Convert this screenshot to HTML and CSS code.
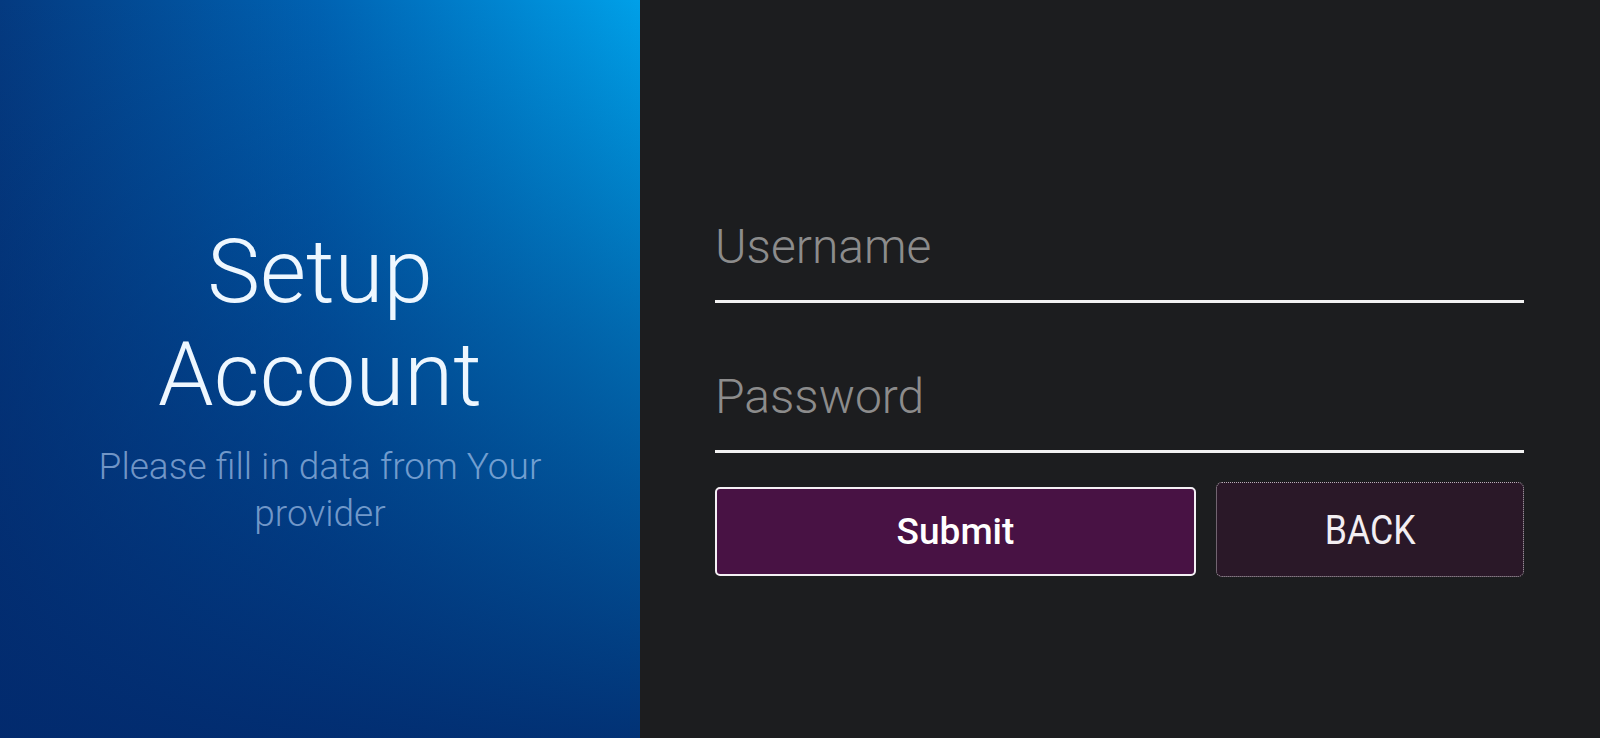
FILE: index.html
```html
<!DOCTYPE html>
<html lang="en">
<head>
<meta charset="UTF-8">
<meta name="viewport" content="width=device-width, initial-scale=1.0">
<link rel="stylesheet" href="styles.css">
<title>Setup Account</title>
</head>
<body>
<div id="intro">
  <div class="title">Setup<br>Account</div>
  <div class="subtitle">Please fill in data from Your provider</div>
</div>

<div id="form">
  <input class="field" type="text" placeholder="Username">
  <input class="field password" type="password" placeholder="Password">
  <div class="actions">
    <button class="submit">Submit</button>
    <button class="back"><span>BACK</span></button>
  </div>
</div>
</body>
</html>
```

FILE: styles.css
```css
html, body {
  height: 100%;
}
body {
  display: flex;
  margin: 0;
  font-family: Roboto, "Liberation Sans", sans-serif;
  background-color: #1c1d1f;
  overflow: hidden;
}
#intro {
  width: 640px;
  flex-shrink: 0;
  box-sizing: border-box;
  padding: 220px 80px 0;
  text-align: center;
  background:
    linear-gradient(to bottom, rgba(2, 41, 108, 0) 0%, rgba(2, 41, 108, 0.45) 45%, rgba(2, 41, 108, 0.92) 100%),
    linear-gradient(to right, #043a80 0%, #0062b2 50%, #00a0e8 100%);
}
.title {
  font-size: 89px;
  font-weight: 300;
  line-height: 103px;
  color: #eef7ff;
}
.subtitle {
  margin-top: 17px;
  font-size: 37px;
  font-weight: 300;
  line-height: 47px;
  color: rgba(190, 215, 250, 0.6);
}
#form {
  flex: 1;
  padding: 219px 76px 0 75px;
}
.field {
  display: block;
  width: 100%;
  box-sizing: content-box;
  height: 56px;
  margin: 0;
  padding: 0 0 25px;
  background: transparent;
  border: none;
  border-bottom: 3px solid #f2f2f2;
  outline: none;
  font-family: Roboto, "Liberation Sans", sans-serif;
  font-size: 48px;
  font-weight: 300;
  line-height: 56px;
  color: #ddd;
}
.field::placeholder {
  color: #8c8c8c;
}
.password {
  margin-top: 66px;
}
.actions {
  display: grid;
  grid-template-columns: 481px 308px;
  gap: 20px;
  align-items: start;
  margin-top: 29px;
}
button {
  font-family: Roboto, "Liberation Sans", sans-serif;
  color: #fff;
  cursor: pointer;
}
.submit {
  height: 89px;
  margin-top: 5px;
  background-color: #481244;
  border: 2px solid #f4f0f4;
  border-radius: 5px;
  font-size: 37px;
  font-weight: 500;
}
.back {
  height: 95px;
  background-color: #2a1828;
  border: 1px dotted #b8b0b8;
  border-radius: 6px;
  font-size: 41px;
  font-weight: 400;
  color: #f2eef2;
}
.back span {
  display: inline-block;
  transform: scaleX(0.87);
}
```
